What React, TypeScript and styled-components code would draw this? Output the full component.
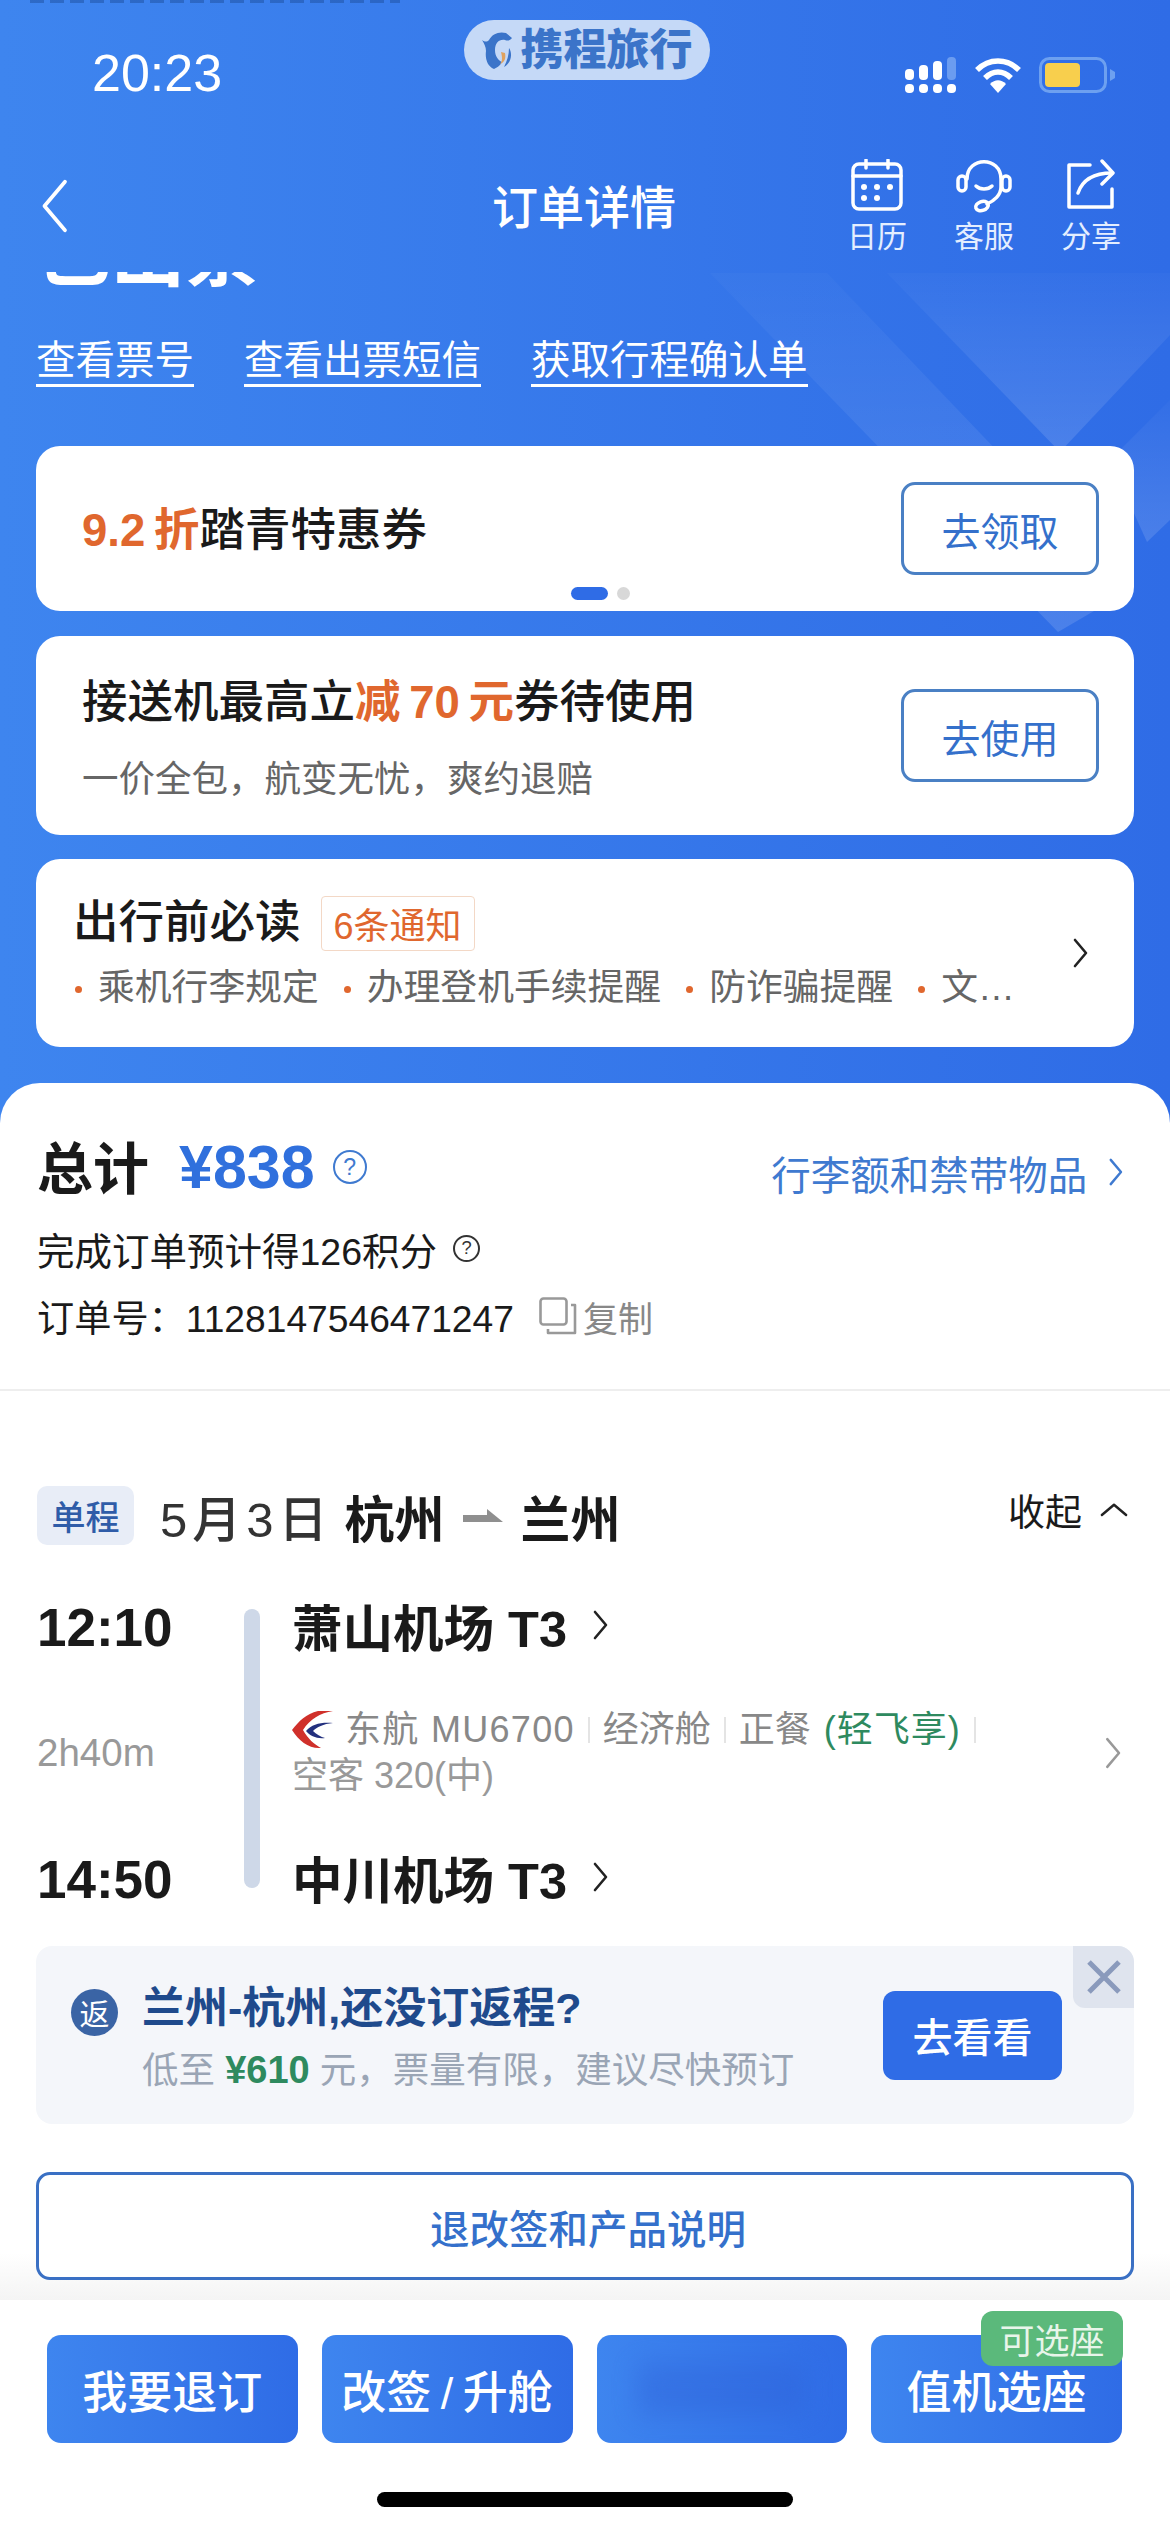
import styled, { createGlobalStyle } from 'styled-components'

const GlobalStyle = createGlobalStyle`
    html, body {
        margin: 0;
        padding: 0;
        background: #fff;
    }
    * {
        box-sizing: border-box;
    }
`

const Chevron = ({ size = 30, color = '#222', dir = 'right', width = 3 }: { size?: number; color?: string; dir?: 'right' | 'left' | 'up'; width?: number }) => {
    const points = dir === 'right' ? '4,2 15,15 4,28' : dir === 'left' ? '15,2 4,15 15,28' : '2,15 15,4 28,15'
    const box = dir === 'up' ? '0 0 30 18' : '0 0 19 30'
    return (
        <svg width={dir === 'up' ? size : (size * 19) / 30} height={dir === 'up' ? (size * 18) / 30 : size} viewBox={box} fill="none">
            <polyline points={points} stroke={color} strokeWidth={width} strokeLinecap="round" strokeLinejoin="round" />
        </svg>
    )
}

const Help = ({ size, color }: { size: number; color: string }) => (
    <HelpCircle $size={size} $color={color}>?</HelpCircle>
)

const SignalIcon = () => (
    <svg width="52" height="38" viewBox="0 0 52 38">
        <rect x="0" y="13" width="9" height="11" rx="4" fill="#fff" />
        <rect x="14" y="9" width="9" height="15" rx="4" fill="#fff" />
        <rect x="28" y="5" width="9" height="19" rx="4" fill="#fff" />
        <rect x="42" y="1" width="9" height="23" rx="4" fill="#6b9cf0" />
        <rect x="0" y="28" width="9" height="9" rx="4" fill="#fff" />
        <rect x="14" y="28" width="9" height="9" rx="4" fill="#fff" />
        <rect x="28" y="28" width="9" height="9" rx="4" fill="#fff" />
        <rect x="42" y="28" width="9" height="9" rx="4" fill="#fff" />
    </svg>
)

const WifiIcon = () => (
    <svg width="48" height="36" viewBox="0 0 48 36" fill="none">
        <path d="M3 13 C15 1 33 1 45 13" stroke="#fff" strokeWidth="5.5" />
        <path d="M11 21 C19 13 29 13 37 21" stroke="#fff" strokeWidth="5.5" />
        <path d="M16 27 C21 22 27 22 32 27 L24 36 Z" fill="#fff" />
    </svg>
)

const BatteryIcon = () => (
    <svg width="76" height="36" viewBox="0 0 76 36" fill="none">
        <rect x="1.5" y="1.5" width="65" height="33" rx="9" stroke="#6da0f0" strokeWidth="3" />
        <rect x="6" y="6" width="35" height="24" rx="4" fill="#f8cf4d" />
        <path d="M71 12 L76 15 L76 21 L71 24 Z" fill="#6da0f0" />
    </svg>
)

const CalendarIcon = () => (
    <svg width="52" height="52" viewBox="0 0 52 52" fill="none" stroke="#fff" strokeWidth="3.5" strokeLinecap="round">
        <rect x="2" y="5" width="48" height="45" rx="6" />
        <path d="M2 17 H50 M15 1 V9 M37 1 V9" />
        <g fill="#fff" stroke="none">
            <circle cx="13" cy="28" r="3" />
            <circle cx="26" cy="28" r="3" />
            <circle cx="39" cy="28" r="3" />
            <circle cx="13" cy="39" r="3" />
            <circle cx="26" cy="39" r="3" />
        </g>
    </svg>
)

const HeadsetIcon = () => (
    <svg width="56" height="54" viewBox="0 0 56 54" fill="none" stroke="#fff" strokeWidth="3.5" strokeLinecap="round">
        <path d="M11 20 C11 -3 45 -3 45 20 V28 C45 36 38 42 31 45" />
        <rect x="2" y="17" width="8" height="15" rx="4" />
        <rect x="46" y="17" width="8" height="15" rx="4" />
        <path d="M20 27 C24 31 32 31 36 27" />
        <ellipse cx="26" cy="47" rx="6.5" ry="4.5" transform="rotate(-20 26 47)" />
    </svg>
)

const ShareIcon = () => (
    <svg width="50" height="52" viewBox="0 0 50 52" fill="none" stroke="#fff" strokeWidth="3.5" strokeLinecap="round" strokeLinejoin="round">
        <path d="M24 6 H3 V48 H46 V30" />
        <path d="M12 34 C16 22 26 14 46 14" />
        <path d="M36 2 L47 14 L36 25" />
    </svg>
)

const CopyIcon = () => (
    <svg width="38" height="38" viewBox="0 0 38 38" fill="none" stroke="#999" strokeWidth="2.6" strokeLinejoin="round">
        <rect x="1.5" y="1.5" width="26" height="26" rx="3" />
        <path d="M32 8 H36 V36 H9 V32" />
    </svg>
)

const AirlineLogo = () => (
    <svg width="42" height="38" viewBox="0 0 42 38">
        <path d="M0 19 C7 10 14 3 26 0 H41 C28 2 18 8 11 19 C16 28 22 33 29 37 C17 38 7 30 0 19 Z" fill="#d0302b" />
        <path d="M14 20 C20 13 29 11 41 12 C31 13 25 16 21 20 C24 23 29 26 33 27 C25 28 18 25 14 20 Z" fill="#23307e" />
    </svg>
)

const DolphinIcon = () => (
    <svg width="32" height="38" viewBox="0 0 32 38">
        <path d="M1 9 C4 11 6 11 8 9 C11 3 18 0 25 2 L31 7 C29 10 26 10 24 9 C18 8 14 12 14 19 C14 25 17 29 21 31 C19 35 15 37 13 38 C6 35 4 27 5 20 C5 16 3 12 1 9 Z" fill="#3b74c9" />
        <path d="M20 21 L24 22 C25 27 24 31 19 33 C22 30 21 25 20 21 Z" fill="#e0a25e" />
        <path d="M28 17 C32 23 30 32 23 36 C26 30 28 24 28 17 Z" fill="#3b74c9" />
    </svg>
)

export default function App() {
    return (
        <Screen>
            <GlobalStyle />
            <TopCut />
            <StatusBar>
                <Time>20:23</Time>
                <BrandPill>
                    <DolphinIcon />
                    <BrandName>携程旅行</BrandName>
                </BrandPill>
                <StatusIcons>
                    <SignalIcon />
                    <WifiIcon />
                    <BatteryIcon />
                </StatusIcons>
            </StatusBar>
            <NavBar>
                <BackButton>
                    <Chevron size={56} color="#fff" dir="left" width={2} />
                </BackButton>
                <NavTitle>订单详情</NavTitle>
                <NavActions>
                    <NavAction>
                        <CalendarIcon />
                        <NavLabel>日历</NavLabel>
                    </NavAction>
                    <NavAction>
                        <HeadsetIcon />
                        <NavLabel>客服</NavLabel>
                    </NavAction>
                    <NavAction>
                        <ShareIcon />
                        <NavLabel>分享</NavLabel>
                    </NavAction>
                </NavActions>
            </NavBar>

            <Banner>
                <Decor width="1170" height="400" viewBox="0 272 1170 400">
                    <defs>
                        <linearGradient id="bandFade" x1="0" y1="0" x2="0" y2="1">
                            <stop offset="0" stopColor="#fff" stopOpacity="0.02" />
                            <stop offset="1" stopColor="#fff" stopOpacity="0.13" />
                        </linearGradient>
                    </defs>
                    <polygon points="710,273 827,273 1130,590 1058,632" fill="url(#bandFade)" />
                    <polygon points="887,273 1170,273 1170,335 1060,452" fill="url(#bandFade)" />
                    <polygon points="1170,400 1110,460 1147,542 1170,520" fill="url(#bandFade)" />
                </Decor>
                <ScrolledTitle>
                    <ScrolledTitleText>已出票</ScrolledTitleText>
                </ScrolledTitle>
                <LinkRow>
                    <TicketLink>查看票号</TicketLink>
                    <TicketLink>查看出票短信</TicketLink>
                    <TicketLink>获取行程确认单</TicketLink>
                </LinkRow>
                <CardStack>
                    <Card $height={165}>
                        <CardTitle $shift={2}>
                            <Accent>9.2 折</Accent>踏青特惠券
                        </CardTitle>
                        <OutlineButton>去领取</OutlineButton>
                        <Dots>
                            <Dot $active />
                            <Dot />
                        </Dots>
                    </Card>
                    <Card $height={199} $gap={25}>
                        <div>
                            <CardTitle>
                                接送机最高立<Accent>减 70 元</Accent>券待使用
                            </CardTitle>
                            <CardSub>一价全包，航变无忧，爽约退赔</CardSub>
                        </div>
                        <OutlineButton>去使用</OutlineButton>
                    </Card>
                    <NoticeCard>
                        <div>
                            <NoticeHead>
                                <CardTitle>出行前必读</CardTitle>
                                <NoticeTag>6条通知</NoticeTag>
                            </NoticeHead>
                            <NoticeList>
                                <NoticeItem>乘机行李规定</NoticeItem>
                                <NoticeItem>办理登机手续提醒</NoticeItem>
                                <NoticeItem>防诈骗提醒</NoticeItem>
                                <NoticeItem>文…</NoticeItem>
                            </NoticeList>
                        </div>
                        <Chevron size={30} color="#222" width={2.6} />
                    </NoticeCard>
                </CardStack>
            </Banner>

            <Sheet>
                <Summary>
                    <TotalRow>
                        <TotalLabel>总计</TotalLabel>
                        <TotalPrice>¥838</TotalPrice>
                        <Help size={34} color="#3f7ad0" />
                        <BaggageLink>
                            行李额和禁带物品
                            <Chevron size={28} color="#3f7ad0" width={2.6} />
                        </BaggageLink>
                    </TotalRow>
                    <PointsRow>
                        完成订单预计得126积分
                        <Help size={27} color="#333" />
                    </PointsRow>
                    <OrderRow>
                        订单号：1128147546471247
                        <CopyAction>
                            <CopyIcon />
                            复制
                        </CopyAction>
                    </OrderRow>
                </Summary>

                <TripHeader>
                    <TripBadge>单程</TripBadge>
                    <TripDate>5月3日</TripDate>
                    <TripCity>杭州</TripCity>
                    <svg width="40" height="14" viewBox="0 0 40 14">
                        <polygon points="0,6 24,6 24,0 40,13 0,13" fill="#8f8f8f" />
                    </svg>
                    <TripCity>兰州</TripCity>
                    <Collapse>
                        收起
                        <Chevron size={28} color="#222" dir="up" width={2.6} />
                    </Collapse>
                </TripHeader>

                <Timeline>
                    <DepartTime>12:10</DepartTime>
                    <TimelineBar />
                    <Airport $row={1}>
                        萧山机场 T3
                        <Chevron size={30} color="#222" width={2.6} />
                    </Airport>
                    <Duration>2h40m</Duration>
                    <FlightInfo>
                        <div>
                            <FlightLine>
                                <AirlineLogo />
                                <FlightNo>东航 MU6700</FlightNo>
                                <Sep />
                                <span>经济舱</span>
                                <Sep />
                                <span>正餐</span>
                                <Green>(轻飞享)</Green>
                                <Sep />
                            </FlightLine>
                            <PlaneLine>空客 320(中)</PlaneLine>
                        </div>
                        <Chevron size={32} color="#999" width={2.4} />
                    </FlightInfo>
                    <ArriveTime>14:50</ArriveTime>
                    <Airport $row={3}>
                        中川机场 T3
                        <Chevron size={30} color="#222" width={2.6} />
                    </Airport>
                </Timeline>

                <Promo>
                    <CloseBox>
                        <svg width="36" height="36" viewBox="0 0 36 36" fill="none" stroke="#8a9abc" strokeWidth="5">
                            <path d="M3 3 L33 33 M33 3 L3 33" />
                        </svg>
                    </CloseBox>
                    <PromoBadge>返</PromoBadge>
                    <PromoText>
                        <PromoTitle>兰州-杭州,还没订返程?</PromoTitle>
                        <PromoSub>
                            低至 <PromoPrice>¥610</PromoPrice> 元，票量有限，建议尽快预订
                        </PromoSub>
                    </PromoText>
                    <PromoButton>去看看</PromoButton>
                </Promo>

                <ExplainButton>退改签和产品说明</ExplainButton>
            </Sheet>

            <BottomBar>
                <ActionGrid>
                    <ActionButton>我要退订</ActionButton>
                    <ActionButton>改签 / 升舱</ActionButton>
                    <ActionButton>
                        <RedactedLabel />
                    </ActionButton>
                    <ActionButton>
                        值机选座
                        <SeatTag>可选座</SeatTag>
                    </ActionButton>
                </ActionGrid>
                <HomeIndicator />
            </BottomBar>
        </Screen>
    )
}

const Screen = styled.div`
    position: relative;
    width: 1170px;
    height: 2532px;
    overflow: hidden;
    display: flex;
    flex-direction: column;
    font-family: 'Liberation Sans', 'Noto Sans CJK SC', sans-serif;
    color: #1a1a1a;
    background: linear-gradient(90deg, #3e85ef 0%, #2f6ce6 100%);
`

const TopCut = styled.div`
    height: 3px;
    width: 370px;
    margin-left: 30px;
    background: repeating-linear-gradient(90deg, #1d4f9e 0 14px, transparent 14px 20px);
    opacity: 0.5;
`

const StatusBar = styled.div`
    height: 117px;
    display: grid;
    grid-template-columns: 1fr auto 1fr;
    padding: 17px 55px 0 92px;
`

const Time = styled.div`
    font-size: 52px;
    line-height: 60px;
    margin-top: 23px;
    color: #fff;
`

const BrandPill = styled.div`
    width: 246px;
    height: 60px;
    border-radius: 30px;
    background: #c5d9f7;
    display: flex;
    align-items: center;
    justify-content: center;
    gap: 8px;
    transform: translateX(-17px);
`

const BrandName = styled.span`
    font-size: 43px;
    font-weight: 900;
    line-height: 60px;
    color: #3b74c9;
`

const StatusIcons = styled.div`
    display: flex;
    justify-content: flex-end;
    align-items: center;
    gap: 17px;
    height: 38px;
    margin-top: 36px;
`

const NavBar = styled.div`
    height: 152px;
    padding: 22px 49px 0 37px;
    display: grid;
    grid-template-columns: 1fr auto 1fr;
    align-items: center;
`

const BackButton = styled.div`
    display: flex;
    transform: translateY(-1px);
`

const NavTitle = styled.div`
    font-size: 46px;
    font-weight: 500;
    color: #fff;
    transform: translate(5px, -3px);
`

const NavActions = styled.div`
    display: flex;
    justify-content: flex-end;
    gap: 47px;
`

const NavAction = styled.div`
    width: 60px;
    display: flex;
    flex-direction: column;
    align-items: center;
    height: 96px;
    justify-content: space-between;
`

const NavLabel = styled.div`
    font-size: 30px;
    line-height: 36px;
    color: #e4eeff;
`

const Banner = styled.div`
    position: relative;
    height: 811px;
`

const Decor = styled.svg`
    position: absolute;
    left: 0;
    top: 0;
`

const ScrolledTitle = styled.div`
    position: relative;
    height: 16px;
    overflow: hidden;
    padding-left: 37px;
`

const ScrolledTitleText = styled.div`
    font-size: 74px;
    line-height: 74px;
    font-weight: 700;
    margin-top: -54px;
    color: #fff;
`

const LinkRow = styled.div`
    position: relative;
    display: flex;
    gap: 50px;
    padding-left: 36px;
    margin-top: 48px;
`

const TicketLink = styled.a`
    font-size: 39.5px;
    line-height: 48px;
    color: #fff;
    border-bottom: 3px solid #fff;
`

const CardStack = styled.div`
    position: relative;
    margin-top: 59px;
    padding: 0 36px;
`

const Card = styled.div<{ $height: number; $gap?: number }>`
    position: relative;
    height: ${p => p.$height}px;
    margin-top: ${p => p.$gap ?? 0}px;
    border-radius: 24px;
    background: #fff;
    display: flex;
    align-items: center;
    justify-content: space-between;
    padding: 0 35px 0 46px;
`

const CardTitle = styled.div<{ $shift?: number }>`
    font-size: 45.5px;
    line-height: 60px;
    font-weight: 500;
    color: #1a1a1a;
    white-space: nowrap;
    transform: translateY(${p => p.$shift ?? 0}px);
`

const Accent = styled.span`
    color: #e0672e;
    font-weight: 600;
    word-spacing: -4px;
`

const CardSub = styled.div`
    font-size: 36.5px;
    line-height: 50px;
    margin: 22px 0 -6px;
    color: #666;
`

const OutlineButton = styled.div`
    width: 198px;
    height: 93px;
    border: 3px solid #4a80c4;
    border-radius: 14px;
    display: flex;
    align-items: center;
    justify-content: center;
    font-size: 39px;
    color: #3470cb;
`

const Dots = styled.div`
    position: absolute;
    left: 535px;
    bottom: 11px;
    display: flex;
    gap: 9px;
`

const Dot = styled.span<{ $active?: boolean }>`
    width: ${p => (p.$active ? 37 : 13)}px;
    height: 13px;
    border-radius: 7px;
    background: ${p => (p.$active ? '#2f6ce6' : '#d8d8d8')};
`

const NoticeCard = styled.div`
    height: 188px;
    margin-top: 24px;
    border-radius: 24px;
    background: #fff;
    display: flex;
    align-items: center;
    justify-content: space-between;
    padding: 0 44px 0 37px;
`

const NoticeHead = styled.div`
    display: flex;
    align-items: center;
    gap: 20px;
`

const NoticeTag = styled.div`
    height: 55px;
    padding: 0 12px;
    border: 1px solid #f3d8c6;
    border-radius: 4px;
    display: flex;
    align-items: center;
    font-size: 36px;
    color: #e0672e;
`

const NoticeList = styled.div`
    display: flex;
    gap: 23px;
    margin-top: 10px;
    font-size: 36.8px;
    line-height: 50px;
    color: #666;
    white-space: nowrap;
`

const NoticeItem = styled.span`
    position: relative;
    padding-left: 25px;
    &::before {
        content: '';
        position: absolute;
        left: 2px;
        top: 23px;
        width: 7px;
        height: 7px;
        border-radius: 50%;
        background: #e0672e;
    }
`

const Sheet = styled.div`
    height: 1217px;
    background: linear-gradient(180deg, #fff 0, #fff 1170px, #f4f4f4 1217px);
    border-radius: 40px 40px 0 0;
    display: flex;
    flex-direction: column;
`

const Summary = styled.div`
    padding: 50px 37px 48px;
    border-bottom: 2px solid #eee;
`

const TotalRow = styled.div`
    height: 68px;
    display: flex;
    align-items: center;
`

const TotalLabel = styled.div`
    font-size: 56px;
    font-weight: 600;
    width: 142px;
    transform: translateY(-3px);
`

const TotalPrice = styled.div`
    font-size: 61px;
    color: #3070dd;
    font-weight: 600;
    margin-right: 18px;
`

const HelpCircle = styled.span<{ $size: number; $color: string }>`
    width: ${p => p.$size}px;
    height: ${p => p.$size}px;
    border: 2px solid ${p => p.$color};
    border-radius: 50%;
    color: ${p => p.$color};
    font-size: ${p => p.$size * 0.68}px;
    display: inline-flex;
    align-items: center;
    justify-content: center;
`

const BaggageLink = styled.div`
    margin: 10px 8px 0 auto;
    display: flex;
    align-items: center;
    gap: 20px;
    font-size: 39.5px;
    color: #3f7ad0;
`

const PointsRow = styled.div`
    height: 50px;
    margin-top: 22px;
    display: flex;
    align-items: center;
    gap: 16px;
    font-size: 37.5px;
`

const OrderRow = styled.div`
    height: 50px;
    margin-top: 18px;
    display: flex;
    align-items: center;
    font-size: 37.2px;
`

const CopyAction = styled.div`
    display: flex;
    align-items: center;
    gap: 6px;
    margin-left: 25px;
    font-size: 35px;
    color: #888;
`

const TripHeader = styled.div`
    height: 59px;
    margin-top: 95px;
    padding: 0 42px 0 37px;
    display: flex;
    align-items: center;
    gap: 18px;
`

const TripBadge = styled.div`
    width: 97px;
    height: 59px;
    border-radius: 10px;
    background: #e8edf7;
    color: #2f5ca8;
    font-size: 34px;
    font-weight: 500;
    display: flex;
    align-items: center;
    justify-content: center;
    margin-right: 8px;
`

const TripDate = styled.div`
    font-size: 49px;
    font-weight: 500;
    color: #333;
    letter-spacing: 5px;
    margin-right: -6px;
`

const TripCity = styled.div`
    font-size: 50px;
    font-weight: 700;
`

const Collapse = styled.div`
    margin-left: auto;
    display: flex;
    align-items: center;
    gap: 18px;
    font-size: 37px;
    transform: translateY(-6px);
`

const Timeline = styled.div`
    margin-top: 47px;
    padding: 0 47px 0 37px;
    display: grid;
    grid-template-columns: 207px 16px 32px 1fr;
    grid-template-rows: 70px 182px 70px;
`

const ClockTime = styled.div`
    grid-column: 1;
    font-size: 53px;
    font-weight: 700;
    display: flex;
    align-items: center;
`

const DepartTime = styled(ClockTime)`
    grid-row: 1;
`

const ArriveTime = styled(ClockTime)`
    grid-row: 3;
`

const Duration = styled.div`
    grid-column: 1;
    grid-row: 2;
    font-size: 38.5px;
    color: #999;
    display: flex;
    align-items: center;
`

const TimelineBar = styled.div`
    grid-column: 2;
    grid-row: 1 / 4;
    margin: 17px 0 26px;
    border-radius: 8px;
    background: #ced8e8;
`

const Airport = styled.div<{ $row: number }>`
    grid-column: 4;
    grid-row: ${p => p.$row};
    display: flex;
    align-items: center;
    gap: 24px;
    font-size: 50.5px;
    font-weight: 700;
    transform: translateY(-2px);
`

const FlightInfo = styled.div`
    grid-column: 4;
    grid-row: 2;
    display: flex;
    align-items: center;
    justify-content: space-between;
    font-size: 36px;
    line-height: 46px;
`

const FlightLine = styled.div`
    display: flex;
    align-items: center;
    gap: 9px;
    color: #888;
    white-space: nowrap;
`

const FlightNo = styled.span`
    margin-left: 2px;
    letter-spacing: 1.3px;
`

const Sep = styled.i`
    width: 2px;
    height: 26px;
    margin: 0 4px;
    background: #e4e4e4;
`

const Green = styled.span`
    color: #2e8a5f;
    margin-left: 4px;
    letter-spacing: 1px;
`

const PlaneLine = styled.div`
    color: #999;
`

const Promo = styled.div`
    position: relative;
    height: 178px;
    margin: 32px 36px 0;
    padding: 0 72px 0 35px;
    border-radius: 16px;
    background: #f4f6fa;
    display: flex;
    align-items: center;
`

const CloseBox = styled.div`
    position: absolute;
    right: 0;
    top: 0;
    width: 61px;
    height: 62px;
    border-radius: 0 16px 0 12px;
    background: #dfe4ee;
    display: flex;
    align-items: center;
    justify-content: center;
`

const PromoBadge = styled.div`
    width: 47px;
    height: 47px;
    border-radius: 50%;
    background: #3a64a5;
    color: #fff;
    font-size: 30px;
    display: flex;
    align-items: center;
    justify-content: center;
    margin-right: 24px;
    transform: translateY(-23px);
`

const PromoText = styled.div`
    flex: 1;
    white-space: nowrap;
    transform: translateY(3px);
`

const PromoTitle = styled.div`
    font-size: 43px;
    line-height: 54px;
    font-weight: 600;
    color: #1f4a8c;
`

const PromoSub = styled.div`
    font-size: 36.5px;
    line-height: 50px;
    margin-top: 10px;
    color: #9aa5b5;
`

const PromoPrice = styled.span`
    font-size: 38px;
    color: #2e8a5f;
    font-weight: 700;
`

const PromoButton = styled.div`
    width: 179px;
    height: 89px;
    border-radius: 12px;
    background: #2f6ce6;
    color: #fff;
    font-size: 40px;
    font-weight: 500;
    display: flex;
    align-items: center;
    justify-content: center;
`

const ExplainButton = styled.div`
    height: 108px;
    margin: 48px 36px 0;
    padding-left: 6px;
    border: 3px solid #3a70c4;
    border-radius: 14px;
    background: #fff;
    color: #3470cb;
    font-size: 39.5px;
    font-weight: 500;
    display: flex;
    align-items: center;
    justify-content: center;
`

const BottomBar = styled.div`
    height: 232px;
    background: #fff;
    padding-top: 35px;
`

const ActionGrid = styled.div`
    display: grid;
    grid-template-columns: repeat(4, 1fr);
    gap: 24px;
    padding: 0 48px 0 47px;
`

const ActionButton = styled.div`
    position: relative;
    height: 108px;
    border-radius: 14px;
    background: linear-gradient(90deg, #3e85ef 0%, #2f6ce6 100%);
    color: #fff;
    font-size: 45px;
    font-weight: 500;
    word-spacing: -3px;
    white-space: nowrap;
    display: flex;
    align-items: center;
    justify-content: center;
`

const RedactedLabel = styled.div`
    width: 170px;
    height: 52px;
    background: #2f62d8;
    opacity: 0.4;
    filter: blur(12px);
`

const SeatTag = styled.div`
    position: absolute;
    right: -1px;
    top: -24px;
    width: 142px;
    height: 55px;
    border-radius: 12px;
    background: #5bb97b;
    color: #e8f5ea;
    font-size: 35px;
    font-weight: 400;
    display: flex;
    align-items: center;
    justify-content: center;
`

const HomeIndicator = styled.div`
    width: 416px;
    height: 15px;
    margin: 49px auto 0;
    border-radius: 8px;
    background: #000;
`
